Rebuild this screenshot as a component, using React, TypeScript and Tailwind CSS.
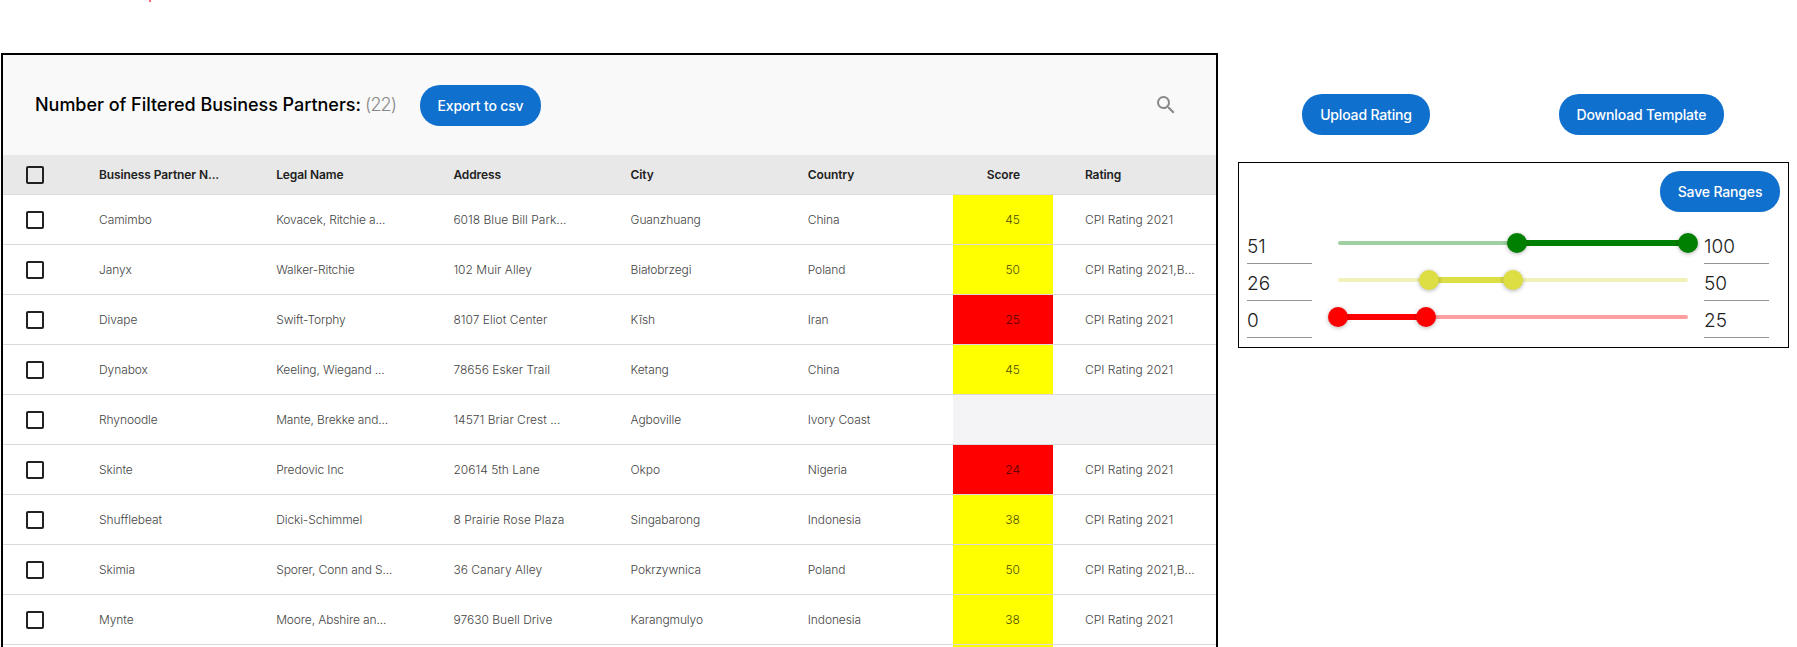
import { MdSearch } from "react-icons/md";

type Row = [string, string, string, string, string, number | null, string];

const rows: Row[] = [
  ["Camimbo", "Kovacek, Ritchie a...", "6018 Blue Bill Park...", "Guanzhuang", "China", 45, "CPI Rating 2021"],
  ["Janyx", "Walker-Ritchie", "102 Muir Alley", "Białobrzegi", "Poland", 50, "CPI Rating 2021,B..."],
  ["Divape", "Swift-Torphy", "8107 Eliot Center", "Kīsh", "Iran", 25, "CPI Rating 2021"],
  ["Dynabox", "Keeling, Wiegand ...", "78656 Esker Trail", "Ketang", "China", 45, "CPI Rating 2021"],
  ["Rhynoodle", "Mante, Brekke and...", "14571 Briar Crest ...", "Agboville", "Ivory Coast", null, ""],
  ["Skinte", "Predovic Inc", "20614 5th Lane", "Okpo", "Nigeria", 24, "CPI Rating 2021"],
  ["Shufflebeat", "Dicki-Schimmel", "8 Prairie Rose Plaza", "Singabarong", "Indonesia", 38, "CPI Rating 2021"],
  ["Skimia", "Sporer, Conn and S...", "36 Canary Alley", "Pokrzywnica", "Poland", 50, "CPI Rating 2021,B..."],
  ["Mynte", "Moore, Abshire an...", "97630 Buell Drive", "Karangmulyo", "Indonesia", 38, "CPI Rating 2021"],
];

const headers = ["Business Partner N...", "Legal Name", "Address", "City", "Country"];
const tracking = [
  "tracking-[-0.08px]",
  "tracking-[-0.12px]",
  "tracking-[0.02px]",
  "tracking-[-0.1px]",
  "tracking-[-0.1px]",
];
const grid = "grid grid-cols-[64px_repeat(5,177.2px)_100px_1fr]";

function scoreColor(score: number | null) {
  if (score === null) return "bg-[#f4f4f7]";
  return score <= 25 ? "bg-[#ff0000]" : "bg-[#ffff00]";
}

function Checkbox() {
  return <span className="ml-[23px] block size-[18px] rounded-[2px] border-2 border-[#212121]" />;
}

function Button({ children, className }: { children: string; className: string }) {
  return (
    <button
      className={`h-[41px] shrink-0 rounded-[20px] bg-[#1070ce] text-center text-[14px] font-medium tracking-[-0.16px] whitespace-nowrap text-white ${className}`}
    >
      {children}
    </button>
  );
}

function Thumb({ at, color }: { at: number; color: string }) {
  return (
    <span
      className={`absolute top-0 size-5 -translate-x-1/2 rounded-full shadow-[0_1px_4px_rgba(0,0,0,0.3)] ${color}`}
      style={{ left: `${at}%` }}
    />
  );
}

function Range({ low, high, color }: { low: number; high: number; color: string }) {
  const field = "h-[31px] w-[65px] border-b border-[#949494] text-[19px] leading-[27px] font-light text-[#212121]";
  return (
    <div className="flex h-[37px] items-start">
      <div className={field}>{low}</div>
      <div className="relative ml-[26px] h-5 w-[350px]">
        <span className={`absolute top-[8px] h-1 w-full rounded-full opacity-[.38] ${color}`} />
        <span
          className={`absolute top-[7px] h-1.5 ${color}`}
          style={{ left: `${low}%`, width: `${high - low}%` }}
        />
        <Thumb at={low} color={color} />
        <Thumb at={high} color={color} />
      </div>
      <div className={`ml-4 ${field}`}>{high}</div>
    </div>
  );
}

export default function App() {
  return (
    <div className="flex h-[647px] overflow-hidden bg-white font-['Inter',sans-serif]">
      <span className="absolute top-0 left-[149px] size-[2px] rounded-full bg-[#e8364f]" />
      <section className="mt-[53px] ml-px h-[700px] w-[1217px] shrink-0 border-2 border-black">
        <div className="flex h-[100px] items-center bg-[#f9f9f9] pl-8">
          <h1 className="mb-0.5 w-[330px] text-[18px] font-medium tracking-[-0.03px] whitespace-nowrap text-black">
            Number of Filtered Business Partners:
          </h1>
          <span className="mb-0.5 w-[55px] text-[18px] font-light tracking-[-0.85px] text-[#888]">(22)</span>
          <Button className="mt-px w-[121px]">Export to csv</Button>
          <MdSearch className="mr-[38px] ml-auto size-6 text-[#888]" />
        </div>
        <div
          className={`${grid} h-10 items-center border-b border-[#dadada] bg-[#e8e8e8] text-[12px] font-semibold tracking-[-0.1px] text-[#212121]`}
        >
          <Checkbox />
          {headers.map((h) => (
            <span key={h} className="pl-8 whitespace-nowrap">
              {h}
            </span>
          ))}
          <span className="pr-[33px] text-right">Score</span>
          <span className="pl-8">Rating</span>
        </div>
        {rows.map((row, i) => (
          <div
            key={i}
            className={`${grid} h-[50px] border-b border-[#dadada] text-[12px] leading-[50px] font-light whitespace-nowrap text-[#444]`}
          >
            <span className="flex items-center">
              <Checkbox />
            </span>
            {row.slice(0, 5).map((cell, j) => (
              <span key={j} className={`h-[49px] pl-8 ${tracking[j]}`}>
                {cell}
              </span>
            ))}
            <span className={`h-[49px] pr-[33px] text-right text-black/75 ${scoreColor(row[5])}`}>{row[5]}</span>
            <span className={`h-[49px] pl-8 tracking-[0.03px] ${row[5] === null ? "bg-[#f4f4f7]" : ""}`}>
              {row[6]}
            </span>
          </div>
        ))}
        <div className={`${grid} h-[50px]`}>
          <span className="col-start-7 bg-[#ffff00]" />
        </div>
      </section>
      <aside className="ml-5 w-[551px] shrink-0 pt-[94px]">
        <div className="flex pl-[64px]">
          <Button className="w-[128px]">Upload Rating</Button>
          <Button className="ml-[129px] w-[165px]">Download Template</Button>
        </div>
        <div className="mt-[27px] h-[186px] border border-black pt-2 pl-2">
          <div className="flex justify-end pr-2">
            <Button className="w-[120px]">Save Ranges</Button>
          </div>
          <div className="mt-[21px]">
            <Range low={51} high={100} color="bg-[#008000]" />
            <Range low={26} high={50} color="bg-[#dddd44]" />
            <Range low={0} high={25} color="bg-[#ff0000]" />
          </div>
        </div>
      </aside>
    </div>
  );
}
